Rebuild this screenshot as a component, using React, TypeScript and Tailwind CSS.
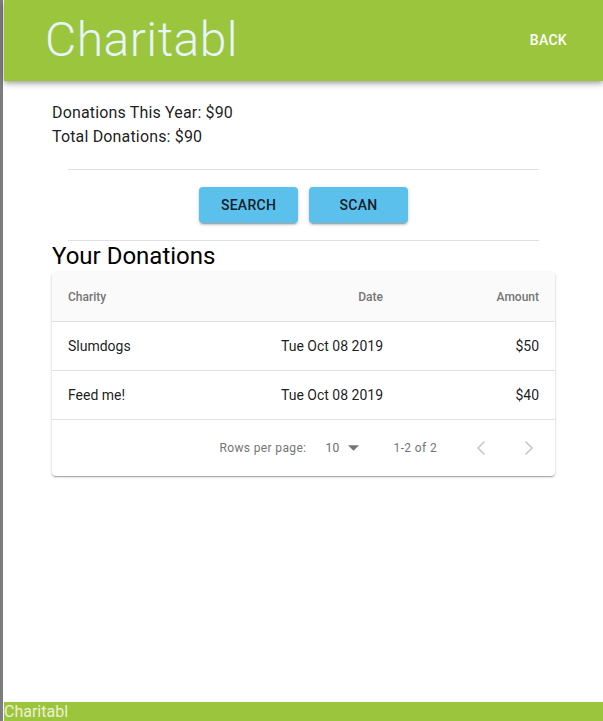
import { ChevronLeft, ChevronRight } from 'lucide-react';

const donations = [
  { charity: 'Slumdogs', date: 'Tue Oct 08 2019', amount: '$50' },
  { charity: 'Feed me!', date: 'Tue Oct 08 2019', amount: '$40' },
];

export default function App() {
  return (
    <div
      className="min-h-screen flex border-l-[3px] border-[#7d7d7d] bg-white"
      style={{ fontFamily: 'Roboto, "Liberation Sans", sans-serif' }}
    >
      <div className="ml-px flex-1 flex flex-col min-h-screen">
        {/* Header */}
        <header className="h-[81px] bg-[#9bc53d] flex items-center justify-between pl-[41px] pr-[36px] shadow-[0_2px_4px_-1px_rgba(0,0,0,0.2),0_4px_5px_0_rgba(0,0,0,0.14),0_1px_10px_0_rgba(0,0,0,0.12)] relative z-10">
          <h1 className="text-[48px] font-light leading-none tracking-[0.01em] text-[#e8f4fb] -mt-[2px]">Charitabl</h1>
          <button className="text-[14px] font-medium tracking-[0.02em] text-white uppercase">Back</button>
        </header>

        {/* Stats */}
        <main className="flex-1 px-[48px]">
          <div className="pt-[20px] text-[16px] leading-[24px] tracking-[0.01em] text-black/90">
            <p>Donations This Year: $90</p>
            <p>Total Donations: $90</p>
          </div>

          <hr className="mt-[20px] mx-[16px] border-[#e0e0e0]" />

          <div className="flex justify-center gap-[11px] mt-[17px]">
            <button className="w-[99px] h-[36px] rounded bg-[#5bc0eb] text-[14px] font-medium text-[#15202b] uppercase tracking-[0.02em] shadow-[0_3px_1px_-2px_rgba(0,0,0,0.2),0_2px_2px_0_rgba(0,0,0,0.14),0_1px_5px_0_rgba(0,0,0,0.12)]">
              Search
            </button>
            <button className="w-[99px] h-[36px] rounded bg-[#5bc0eb] text-[14px] font-medium text-[#15202b] uppercase tracking-[0.02em] shadow-[0_3px_1px_-2px_rgba(0,0,0,0.2),0_2px_2px_0_rgba(0,0,0,0.14),0_1px_5px_0_rgba(0,0,0,0.12)]">
              Scan
            </button>
          </div>

          <hr className="mt-[17px] mx-[16px] border-[#e0e0e0]" />

          <h2 className="text-[24px] leading-[28px] text-black mt-[1px]">Your Donations</h2>

          {/* Table card */}
          <div className="mt-[2px] rounded bg-white shadow-[0_1px_3px_0_rgba(0,0,0,0.2),0_1px_1px_0_rgba(0,0,0,0.14),0_2px_1px_-1px_rgba(0,0,0,0.12)] overflow-hidden">
            <div className="grid grid-cols-[1fr_1fr_156px] h-[50px] items-center bg-[#fafafa] border-b border-[#e0e0e0] text-[12px] font-medium text-[#757575]">
              <div className="pl-[16px]">Charity</div>
              <div className="text-right pr-[16px]">Date</div>
              <div className="text-right pr-[16px]">Amount</div>
            </div>
            {donations.map((d) => (
              <div
                key={d.charity}
                className="grid grid-cols-[1fr_1fr_156px] h-[49px] items-center border-b border-[#e0e0e0] text-[14px] text-black/90"
              >
                <div className="pl-[16px]">{d.charity}</div>
                <div className="text-right pr-[16px]">{d.date}</div>
                <div className="text-right pr-[16px]">{d.amount}</div>
              </div>
            ))}
            <div className="h-[56px] flex items-center justify-end text-[12px] tracking-[0.03em] text-[#757575] pr-[14px]">
              <span>Rows per page:</span>
              <span className="ml-[19px] flex items-center gap-[5px] text-[#6b6b6b]">
                10
                <svg width="11" height="6" viewBox="0 0 10 5" className="ml-[3px]">
                  <path d="M0 0l5 5 5-5z" fill="#757575" />
                </svg>
              </span>
              <span className="ml-[35px]">1-2 of 2</span>
              <span className="ml-[32px] flex items-center gap-[24px]">
                <ChevronLeft className="w-[24px] h-[24px] text-[#c4c4c4]" strokeWidth={1.5} />
                <ChevronRight className="w-[24px] h-[24px] text-[#c4c4c4]" strokeWidth={1.5} />
              </span>
            </div>
          </div>
        </main>

        {/* Footer */}
        <footer className="h-[19px] bg-[#9bc53d] text-[16px] leading-[19px] text-[#eef0cf]">
          Charitabl
        </footer>
      </div>
    </div>
  );
}
